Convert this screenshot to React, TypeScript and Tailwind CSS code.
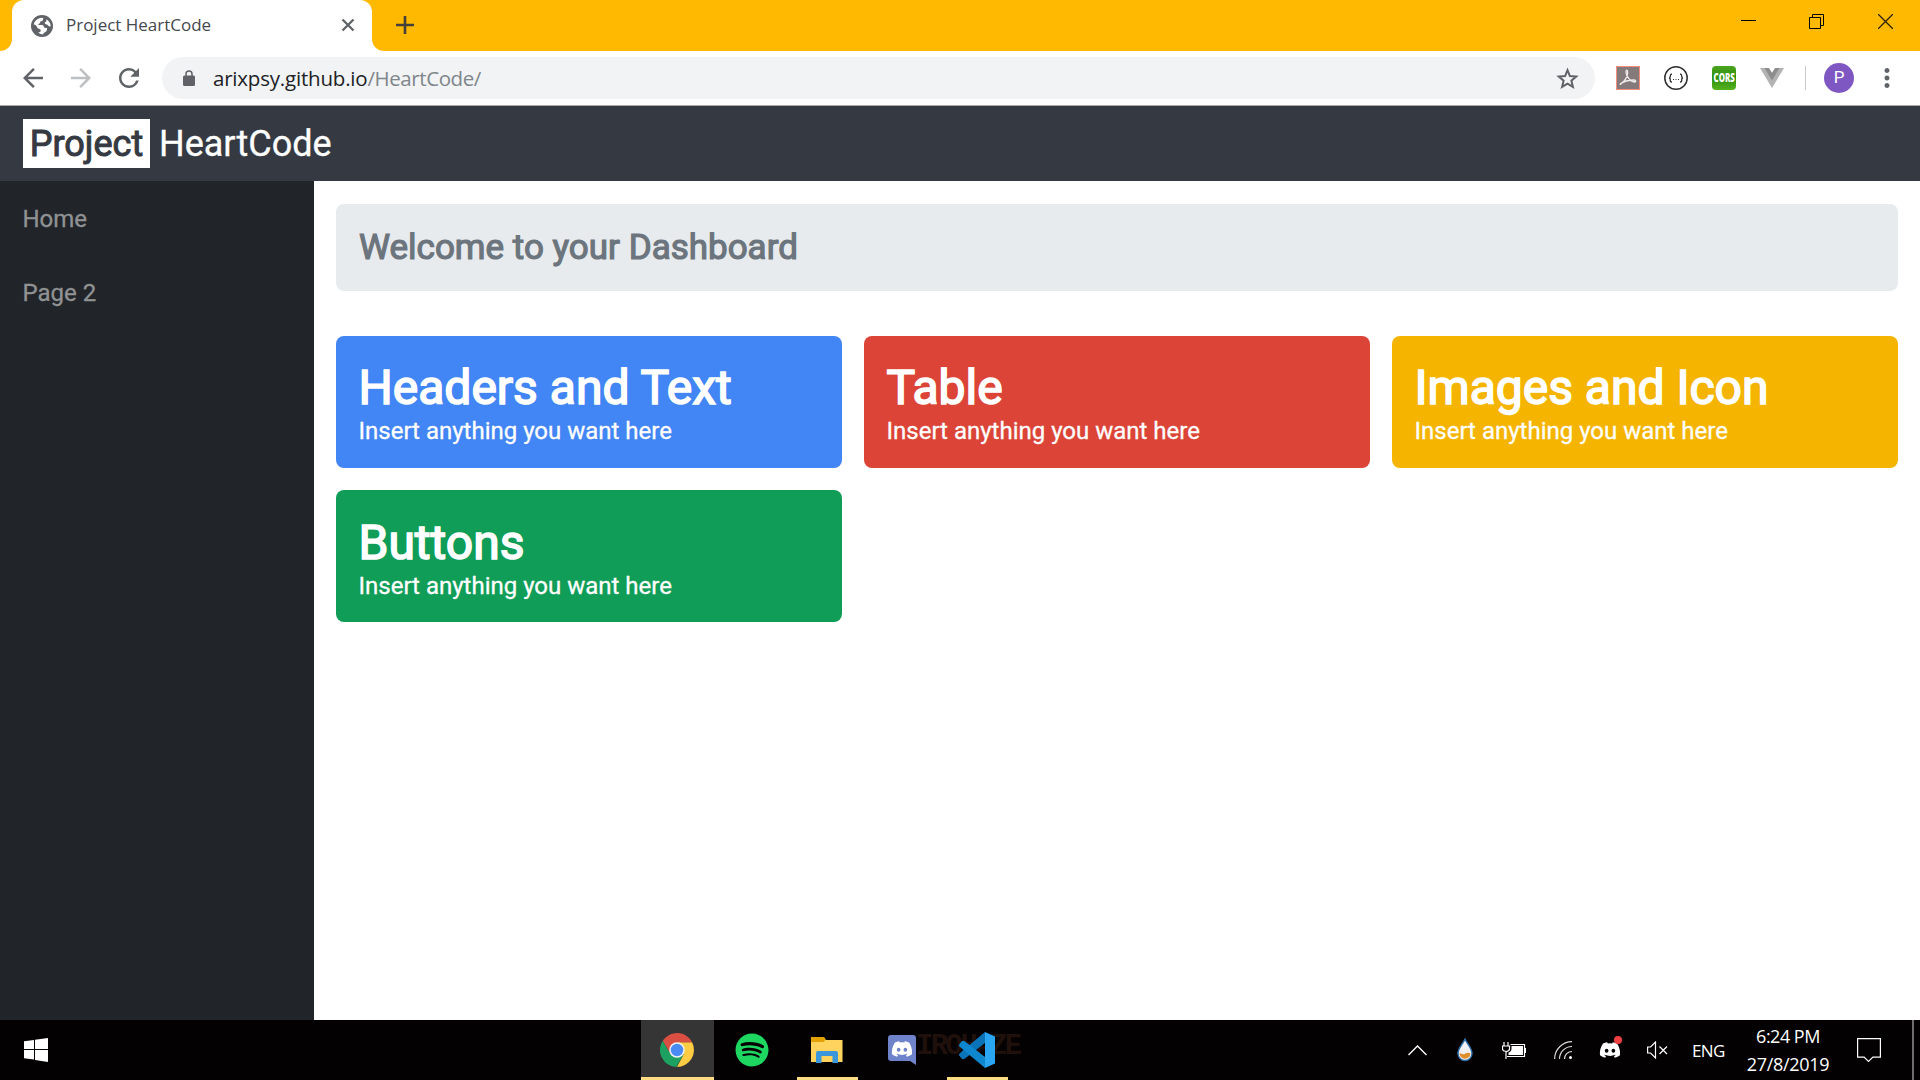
import React from "react";
import { MdArrowBack, MdArrowForward, MdRefresh, MdMoreVert } from "react-icons/md";
import { FaDiscord, FaSpotify } from "react-icons/fa";

const cards = [
  { title: "Headers and Text", color: "bg-[#4285f4]", pad: "pt-[23px]" },
  { title: "Table", color: "bg-[#db4437]", pad: "pt-[23px]" },
  { title: "Images and Icon", color: "bg-[#f4b400]", pad: "pt-[23px]" },
  { title: "Buttons", color: "bg-[#0f9d58]", pad: "pt-6" },
];

function TabStrip() {
  return (
    <div className="flex h-[51px] bg-[#ffb900]">
      <div className="h-full w-3 bg-white">
        <div className="h-full w-full rounded-br-xl bg-[#ffb900]" />
      </div>
      <div className="bg-[#ffb900]">
        <div className="flex h-full w-[360px] items-center rounded-t-xl bg-white pl-[19px] pr-[17px]">
          <svg className="size-[22px]" viewBox="0 0 22 22">
            <circle cx="11" cy="11" r="11" fill="#5f6368" />
            <path d="M2.600 9.500Q3.800 4.500 9 3q3-.8 3.300.2L12 5q-.3 1.200-2 1.300-1 .2-1 1.500-.2 1-1.600 1.300-.6.500.6.800l3.300.1q1.400.2 1.500 1.800.2 1.400 2.200 1 1.500.2 1 2-.4 2-2.500 2.600-1.200.4-1.500 2.100-2.500 0-5-2 2.500.3 2.800-1.700-.1-1.500-1.800-2-2-.6-2.200-2.300-.5-1-2.200-2zM15.500 4.200q4 2.600 4.200 7.300-1.700.3-2.600-1-.8-1.200-2.300-1.200-1.400-.5-1-1.700.3-1 1.500-1.200z" fill="#fff" />
          </svg>
          <span className="ml-[13px] mt-[-1px] whitespace-nowrap font-['Open_Sans'] text-[17px] tracking-[-0.01px] text-[#45494d]">Project HeartCode</span>
          <svg className="ml-auto mt-[-1px] size-[14px]" viewBox="0 0 14 14" fill="none" stroke="#5f6368" strokeWidth="2.3">
            <path d="M1.5 1.5l11 11M12.5 1.5l-11 11" />
          </svg>
        </div>
      </div>
      <div className="h-full flex-1 bg-white">
        <div className="flex h-full rounded-bl-xl bg-[#ffb900] pl-6">
          <svg className="mt-4 size-[18px]" viewBox="0 0 18 18" stroke="#45413a" strokeWidth="2.6">
            <path d="M9 0v18M0 9h18" />
          </svg>
          <div className="ml-auto mr-[27px] mt-[14px] flex gap-[53px]">
            <svg className="h-[15px] w-[15px]" viewBox="0 0 15 15" stroke="#000"><path d="M0 6.5h15" /></svg>
            <svg className="h-[15px] w-[15px]" viewBox="0 0 15 15" stroke="#000" fill="none"><path d="M.5 3.5h11v11H.5zM3.500 3V.5h11v11h-3" /></svg>
            <svg className="ml-[1px] h-[15px] w-[15px]" viewBox="0 0 15 15" stroke="#2b2208" strokeWidth="1.300" fill="none"><path d="M0 0l15 15M15 0L0 15" /></svg>
          </div>
        </div>
      </div>
    </div>
  );
}

function Toolbar() {
  return (
    <div className="flex h-[55px] items-center border-b border-[#a9a9ad] bg-white pl-[18px] text-[#5f6368]">
      <MdArrowBack className="size-[30px]" />
      <MdArrowForward className="ml-[18px] size-[30px] text-[#bdbfc1]" />
      <MdRefresh className="ml-[18px] size-[30px]" />
      <div className="ml-[18px] flex h-[42px] w-[1433px] items-center rounded-full bg-[#f1f3f4] pl-[21px]">
        <svg className="h-4 w-3" viewBox="0 0 12 16">
          <path d="M3 7V4a3 3 0 0 1 6 0v3" fill="none" stroke="#5f6368" strokeWidth="1.500" />
          <rect y="5.500" width="12" height="10.500" rx="1.500" fill="#5f6368" />
        </svg>
        <span className="ml-[18px] mt-[1px] whitespace-nowrap font-['Open_Sans'] text-[20.5px] tracking-[-0.2px] text-[#202124]">
          arixpsy.github.io<span className="tracking-[-0.42px] text-[#80868b]">/HeartCode/</span>
        </span>
        <svg className="ml-auto mr-4 size-[23px]" viewBox="0 0 23 23" fill="none" stroke="#5f6368" strokeWidth="2">
          <path d="M11.500 3.200l2.400 5.900 6.300.5-4.800 4.100 1.500 6.200-5.400-3.300-5.400 3.300 1.500-6.200-4.800-4.100 6.300-.5z" />
        </svg>
      </div>
      <svg className="ml-[21px] size-6" viewBox="0 0 24 24">
        <rect x=".5" y=".5" width="23" height="23" fill="#857a7a" stroke="#f98c7c" />
        <path d="M4.500 18c4-2 7-7 7.200-11.500 0-3-1.800-3-1.700 0 .3 4 4.500 9 8.500 9.500 2 0 1.500-2-1-2-4 0-9 1.300-12 3-2 1.300-1.500 2-.5 1" fill="none" stroke="#f0ecec" strokeWidth="1.300" />
      </svg>
      <svg className="ml-6 size-6" viewBox="0 0 24 24" fill="none" stroke="#2f2f2f">
        <circle cx="12" cy="12" r="11.200" strokeWidth="1.500" fill="#fff" />
        <path d="M8 8c-2 0-1.600 1.300-1.700 2.500 0 1-.5 1.500-1.300 1.500.8 0 1.300.5 1.300 1.500 0 1.200-.3 2.500 1.700 2.500M16 8c2 0 1.600 1.300 1.700 2.500 0 1 .5 1.500 1.300 1.500-.8 0-1.300.5-1.300 1.500 0 1.200.3 2.500-1.700 2.500" strokeWidth="1.300" />
        <path d="M9 13.500h1M11.500 13.500h1M14 13.500h1" />
      </svg>
      <div className="ml-6 flex size-6 items-center justify-center rounded bg-linear-to-b from-[#4aa51f] via-[#2f8f0d] to-[#55b31e]">
        <span className="scale-x-[.66] font-['Open_Sans'] text-[12px] font-extrabold text-white">CORS</span>
      </div>
      <svg className="ml-6 size-6" viewBox="0 0 24 24">
        <path d="M0 2h24L12 22z" fill="#b3b3b3" />
        <path d="M4.500 2h15L12 14.500z" fill="#8d8d8d" />
        <path d="M9 2h6l-3 4.800z" fill="#fff" />
      </svg>
      <div className="ml-[21px] h-6 w-px bg-[#c8cacd]" />
      <div className="ml-[18px] flex size-[30px] items-center justify-center rounded-full bg-[#7e57c2] font-[Roboto] text-[17px] text-white">P</div>
      <MdMoreVert className="ml-[18px] size-[30px]" />
    </div>
  );
}

function Taskbar() {
  return (
    <div className="flex h-[60px] bg-[#030102] font-['Open_Sans'] text-white">
      <div className="flex w-[641px] items-center pl-6">
        <svg className="size-6" viewBox="0 0 24 24" fill="#fff">
          <path d="M0 3.300L10 1.900V11H0zM11 1.700L24 0v11H11zM0 12h10v9.500L0 20.300zM11 12h13v12l-13-2z" />
        </svg>
      </div>
      <div className="flex h-full w-[73px] items-center justify-center border-b-[3px] border-[#ffdb84] bg-[#353535] pr-[2px]">
        <svg className="mt-[3px] size-[34px]" viewBox="0 0 48 48">
          <path d="M24 13h21.300A24 24 0 0 1 24 48l9.500-18.500z" fill="#ffcd43" />
          <path d="M14.500 29.500L3.900 11A24 24 0 0 1 45.300 13H24z" fill="#db4f43" />
          <path d="M33.500 29.500L23 48A24 24 0 0 1 3.900 11l10.600 18.500z" fill="#1da160" />
          <circle cx="24" cy="24" r="11" fill="#f1f1f1" />
          <circle cx="24" cy="24" r="8.800" fill="#4a8af4" />
        </svg>
      </div>
      <div className="ml-[2px] flex h-full w-[73px] items-center justify-center pr-[2px]">
        <FaSpotify className="size-[34px] text-[#1ed760]" />
      </div>
      <div className="ml-2 flex h-full w-[61px] items-center justify-center border-b-[3px] border-[#ffdb84] pr-[2px]">
        <svg className="mt-[3px] h-[27px] w-8" viewBox="0 0 32 27">
          <path d="M0 1h13l2 2h16.500v22H0z" fill="#ffd35e" />
          <path d="M0 0h13l1.500 2-1.500 3H0z" fill="#e2a205" />
          <path d="M5 26V16q0-2 2-2h18q2 0 2 2v10h-5.500v-7H10.500v7z" fill="#3b97dc" />
        </svg>
      </div>
      <div className="relative ml-[30px] flex h-full w-[59px] items-center">
        <span className="absolute left-[28px] top-[12px] font-['Liberation_Mono'] text-[29px] font-bold leading-none tracking-[-2.6px] text-[#1f100c]">IROHAZE</span>
        <svg className="relative h-[30px] w-7" viewBox="0 0 28 30">
          <path d="M3 0h22q3 0 3 3v27l-6-4H3q-3 0-3-3V3q0-3 3-3z" fill="#6f83cb" />
          <FaDiscord x="3" y="3" size="22" color="#fff" />
        </svg>
      </div>
      <div className="relative flex h-full w-[61px] items-center justify-center border-b-[3px] border-[#ffdb84] pr-[2px]">
        <svg className="mt-[3px] size-9" viewBox="0 0 36 36">
          <path d="M1 24.500q-2-2 0-3.500L26 0v11L6 26.500q-2 1.500-3.500 0z" fill="#0a74b8" />
          <path d="M1 11.500q-2 2 0 3.500L26 36V25L6 9.500Q4 8 2.500 9.500z" fill="#0f87cf" />
          <path d="M26 0l10 4.500v27L26 36z" fill="#2aa5f2" />
        </svg>
      </div>
      <div className="flex flex-1 items-center pl-[400px] text-[17px]">
        <svg className="h-[11px] w-[19px]" viewBox="0 0 19 11" fill="none" stroke="#fff" strokeWidth="1.400"><path d="M.5 10l9-9 9 9" /></svg>
        <svg className="ml-[30px] h-6 w-4" viewBox="0 0 16 24">
          <path d="M8 1c2 5 7 9 7 14.500a7 7 0 0 1-14 0C1 10 6 6 8 1z" fill="#f1eff6" stroke="#2d6ea8" strokeWidth="1.400" />
          <path d="M2.500 15q4 2 6 .5t5 0a5.500 5.500 0 0 1-11-.5z" fill="#de8f2b" />
        </svg>
        <svg className="ml-[29px] h-[17px] w-6" viewBox="0 0 24 17" fill="none" stroke="#fff" strokeWidth="1.200">
          <path d="M8.500 2.500h14v12H5M2 0v4M6 0v4M.5 4h7v3q0 2-3.500 2.500Q.5 9 .5 7zM4 9v8" />
          <path d="M9.500 4h11.500v9H6.500v-2.500q3-1 3-4zM22.500 6h1.500v5h-1.500z" fill="#fff" stroke="none" />
        </svg>
        <svg className="ml-[28px] size-[18px]" viewBox="0 0 18 18" fill="none" stroke="#ddd" strokeWidth="1.200">
          <path d="M.6 18A17.500 17.500 0 0 1 18 .6M5.500 18A12.500 12.500 0 0 1 18 5.500M10.500 18A7.500 7.500 0 0 1 18 10.500" />
          <circle cx="16.500" cy="16.500" r="1.500" fill="#fff" stroke="none" />
        </svg>
        <div className="relative ml-[27px] flex">
          <FaDiscord className="size-[22px]" />
          <span className="absolute right-[-1px] top-[-3px] size-2 rounded-full bg-[#ee3f41]" />
        </div>
        <svg className="ml-[26px] h-[18px] w-[21px]" viewBox="0 0 21 18" fill="none" stroke="#fff" strokeWidth="1.200"><path d="M.6 6h3L8.500 1v16L3.600 12H.6zM12.500 5.500l7.500 7.500M20 5.500L12.500 13" /></svg>
        <span className="ml-6 mt-[1px] w-[34px] tracking-[-0.6px]">ENG</span>
        <div className="ml-[18px] w-[88px] whitespace-nowrap text-center text-[18px] leading-7">
          <div className="tracking-[-0.5px]">6:24 PM</div>
          <div className="tracking-[-0.3px]">27/8/2019</div>
        </div>
        <svg className="ml-[25px] size-6" viewBox="0 0 24 24" fill="none" stroke="#fff" strokeWidth="1.200"><path d="M.6.6h22.800v18.500h-7.500l-4.400 4.300-4.400-4.300H.6z" /></svg>
        <div className="ml-auto mr-[6px] h-full w-[2px] bg-[#6e6e6e]" />
      </div>
    </div>
  );
}

export default function App() {
  return (
    <div className="flex h-[1080px] w-[1920px] flex-col overflow-hidden bg-white">
      <TabStrip />
      <Toolbar />
      <header className="flex h-[75px] items-center bg-[#353a42] pl-[23px] font-[Roboto] text-[36px] text-white">
        <span className="flex h-[49px] w-[127px] items-center justify-center bg-white pt-px text-[#353a42] [-webkit-text-stroke:1px_#353a42]">Project</span>
        <span className="ml-[9px] pt-px [-webkit-text-stroke:.3px_#fff]">HeartCode</span>
      </header>
      <div className="flex flex-1 font-[Roboto] text-[24px]">
        <nav className="flex w-[314px] flex-col gap-[38px] bg-[#212529] pl-[22.5px] pt-5 leading-9 text-[#909294] [-webkit-text-stroke:.3px_#909294]">
          <a>Home</a>
          <a>Page 2</a>
        </nav>
        <main className="flex-1 pl-[22px] pr-[22px] pt-[23px]">
          <div className="flex h-[87px] items-center rounded-lg bg-[#e8ebee] pl-[23px] pt-[2px] text-[35px] text-[#6c757d] [-webkit-text-stroke:1.200px_#6c757d]">Welcome to your Dashboard</div>
          <div className="mt-[45px] grid grid-cols-3 gap-[22px] text-white">
            {cards.map((c) => (
              <div key={c.title} className={"h-[132px] rounded-lg pl-[22.5px] " + c.color + " " + c.pad}>
                <h1 className="text-[48px] leading-[58px] [-webkit-text-stroke:1.600px_#fff]">{c.title}</h1>
                <p className="leading-[28px] [-webkit-text-stroke:.3px_#fff]">Insert anything you want here</p>
              </div>
            ))}
          </div>
        </main>
      </div>
      <Taskbar />
    </div>
  );
}
